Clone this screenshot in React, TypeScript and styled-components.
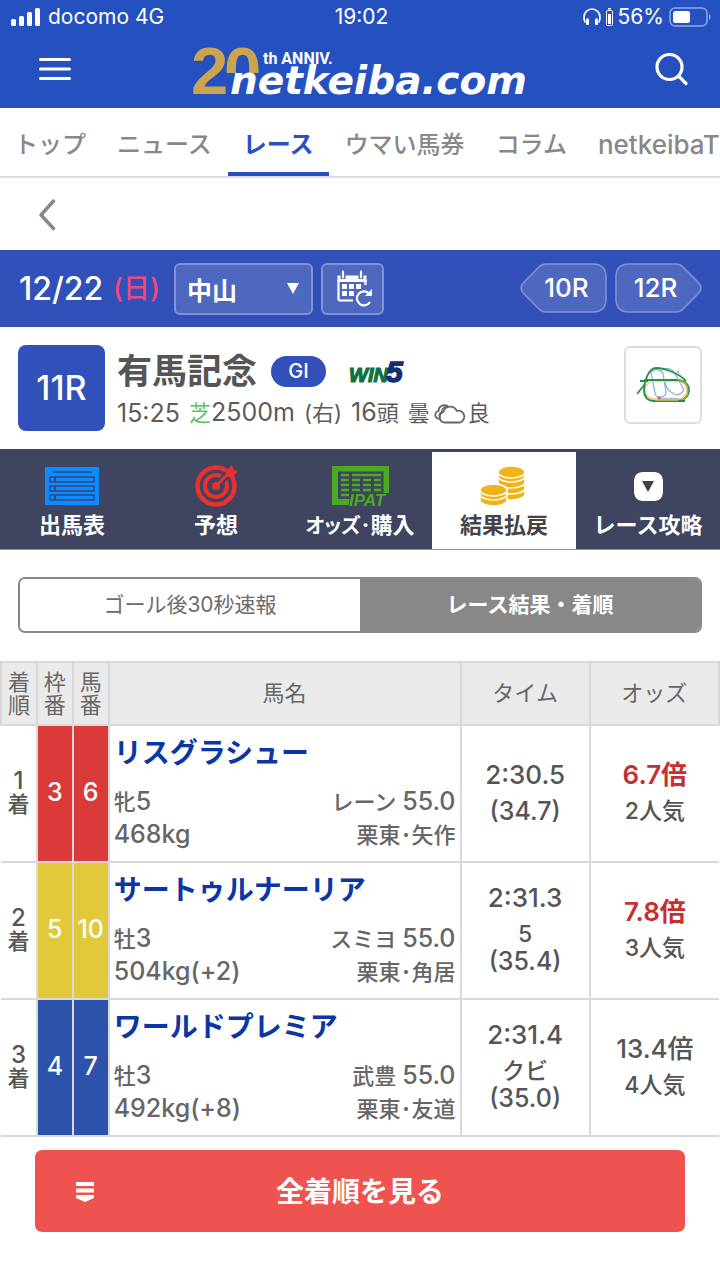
import React from "react";
import styled, { createGlobalStyle } from "styled-components";

const GlobalStyle = createGlobalStyle`
  *, *::before, *::after { box-sizing: border-box; }
  html { -webkit-text-size-adjust: 100%; }
  body {
    margin: 0;
    background: #fff;
    color: #555;
    font-family: Inter, "Noto Sans CJK JP", sans-serif;
    overflow-x: hidden;
  }
  button, select { font: inherit; color: inherit; margin: 0; padding: 0; border: 0; background: none; }
  a { color: inherit; text-decoration: none; }
  svg { display: block; flex: none; overflow: visible; }
`;

const Page = styled.div`
  width: 100%;
  overflow: hidden;
`;

/* Latin figures set larger than the kanji beside them */
const Num = styled.span<{ $size: number }>`
  font-size: ${(p) => p.$size}px;
  line-height: 20px;
`;

/* ---- header ---- */

const TopHeader = styled.header`
  background: #2551c0;
  color: #fff;
`;

const StatusBar = styled.div`
  display: grid;
  grid-template-columns: 1fr auto 1fr;
  align-items: center;
  height: 34px;
  padding: 0 8px 0 11px;
  font-size: 21px;
  line-height: 24px;
`;

const StatusGroup = styled.div<{ $end?: boolean }>`
  display: flex;
  align-items: center;
  gap: ${(p) => (p.$end ? 5 : 7)}px;
  justify-content: ${(p) => (p.$end ? "flex-end" : "flex-start")};
`;

const BrandBar = styled.div`
  display: flex;
  align-items: center;
  justify-content: space-between;
  height: 74px;
  padding: 0 32px 4px 39px;
`;

const IconButton = styled.button`
  display: flex;
  align-items: center;
  justify-content: center;
  cursor: pointer;
`;

const BrandLink = styled.a`
  display: block;
  padding-left: 8px;
`;

/* ---- navigation ---- */

const MainNav = styled.nav`
  display: flex;
  gap: 1px;
  height: 70px;
  border-bottom: 2px solid #ddd;
  overflow: hidden;
`;

const NavLink = styled.a<{ $active?: boolean; $latin?: boolean }>`
  flex: none;
  height: 68px;
  padding: 5px ${(p) => (p.$latin ? 0 : 15)}px 0 14px;
  border-bottom: 4px solid ${(p) => (p.$active ? "#2a50bd" : "transparent")};
  color: ${(p) => (p.$active ? "#2a50c4" : "#888")};
  font-size: ${(p) => (p.$latin ? 26 : 24)}px;
  font-weight: ${(p) => (p.$active ? 700 : 500)};
  line-height: 64px;
  white-space: nowrap;
  & + & { padding-left: 15px; }
`;

const BackRow = styled.div`
  display: flex;
  align-items: center;
  height: 72px;
  padding: 0 38px;
`;

/* ---- race selector ---- */

const RaceBar = styled.div`
  display: flex;
  align-items: flex-start;
  height: 77px;
  padding: 13px 18px 0 19px;
  background: #3150b9;
  color: #fff;
`;

const RaceDate = styled.div`
  display: flex;
  justify-content: space-between;
  width: 155px;
  padding-right: 14px;
  font-size: 32px;
  font-weight: 500;
  line-height: 52px;
  white-space: nowrap;
`;

const Sunday = styled.span`
  color: #f0487f;
  font-size: 27px;
`;

const VenueField = styled.label`
  display: grid;
  align-items: center;
  width: 139px;
  height: 52px;
  margin-right: 8px;
  border: 2px solid #8094d8;
  border-radius: 6px;
  background: #4f68bf;
  & > * { grid-area: 1 / 1; }
  & > svg { justify-self: end; margin: 0 12px 2px 0; pointer-events: none; }
`;

const VenueSelect = styled.select`
  appearance: none;
  width: 100%;
  height: 48px;
  padding: 4px 0 0 11px;
  font-size: 25px;
  font-weight: 700;
`;

const CalendarButton = styled(IconButton)`
  width: 63px;
  height: 52px;
  padding-left: 4px;
  border: 2px solid #8094d8;
  border-radius: 6px;
  background: #4f68bf;
`;

const RaceSteps = styled.div`
  display: flex;
  gap: 8px;
  margin-left: auto;
`;

const StepButton = styled.button<{ $next?: boolean }>`
  display: grid;
  align-items: center;
  width: 87px;
  height: 50px;
  font-size: 26px;
  font-weight: 500;
  line-height: 48px;
  cursor: pointer;
  & > * { grid-area: 1 / 1; }
  & > svg { transform: ${(p) => (p.$next ? "scaleX(-1)" : "none")}; }
  & > span { padding: ${(p) => (p.$next ? "0 6px 0 0" : "0 0 0 6px")}; z-index: 1; }
`;

/* ---- race summary ---- */

const RaceSummary = styled.section`
  display: flex;
  height: 122px;
  padding: 18px;
`;

const RaceNumber = styled.div`
  flex: none;
  width: 87px;
  height: 86px;
  border-radius: 8px;
  background: #3150b9;
  color: #fff;
  font-size: 34px;
  font-weight: 500;
  line-height: 86px;
  text-align: center;
`;

const RaceText = styled.div`
  flex: 1;
  min-width: 0;
  padding-left: 12px;
`;

const TitleRow = styled.div`
  display: flex;
  align-items: center;
  height: 52px;
`;

const RaceTitle = styled.h1`
  margin: 0 14px 0 0;
  color: #555;
  font-size: 35px;
  font-weight: 700;
  line-height: 52px;
`;

const Grade = styled.span`
  width: 55px;
  height: 31px;
  margin-right: 22px;
  border-radius: 16px;
  background: #3150b9;
  color: #fff;
  font-size: 20px;
  font-weight: 500;
  line-height: 31px;
  text-align: center;
`;

const RaceMeta = styled.div`
  display: flex;
  align-items: center;
  gap: 9px;
  color: #5c5c5c;
  font-size: 22px;
  line-height: 32px;
  white-space: nowrap;
`;

const Weather = styled.span`
  display: flex;
  align-items: center;
  gap: 4px;
`;

const Turf = styled.span`
  color: #5fc25f;
`;

const CourseButton = styled(IconButton)`
  flex: none;
  width: 78px;
  height: 78px;
  margin-top: 1px;
  border: 2px solid #ddd;
  border-radius: 6px;
`;

/* ---- section tabs ---- */

const SectionTabs = styled.nav`
  display: grid;
  grid-template-columns: repeat(5, 1fr);
  height: 101px;
  padding-top: 3px;
  border-bottom: 1px solid #8d90a5;
  background: #3f4460;
`;

const SectionTab = styled.a<{ $active?: boolean }>`
  display: flex;
  flex-direction: column;
  align-items: center;
  padding-top: 12px;
  background: ${(p) => (p.$active ? "#fff" : "transparent")};
  color: ${(p) => (p.$active ? "#444" : "#fff")};
  font-size: 22px;
  font-weight: 700;
  line-height: 34px;
  white-space: nowrap;
`;

const TightKana = styled.span`
  font-size: 20px;
  font-feature-settings: "palt";
`;

const TabIcon = styled.span`
  display: flex;
  align-items: center;
  height: 44px;
`;

const MoreBox = styled.span`
  display: flex;
  align-items: center;
  justify-content: center;
  width: 29px;
  height: 29px;
  border-radius: 8px;
  background: #fff;
  outline: 1px solid #444;
`;

/* ---- result switch ---- */

const ResultSwitch = styled.div`
  display: grid;
  grid-template-columns: 1fr 1fr;
  height: 56px;
  margin: 27px 18px 28px;
  border: 2px solid #888;
  border-radius: 7px;
  overflow: hidden;
`;

const SwitchButton = styled.button<{ $active?: boolean }>`
  background: ${(p) => (p.$active ? "#888" : "#fff")};
  color: ${(p) => (p.$active ? "#fff" : "#6c6c6c")};
  font-size: 21px;
  font-weight: ${(p) => (p.$active ? 700 : 400)};
  line-height: 52px;
`;

/* ---- results ---- */

const ResultTable = styled.table`
  width: 100%;
  table-layout: fixed;
  border-collapse: collapse;
`;

const HeadCell = styled.th`
  height: 63px;
  padding: 0;
  border: 2px solid #d9d9d9;
  background: #eaeaea;
  color: #666;
  font-size: 22px;
  font-weight: 400;
  line-height: 23px;
`;

const Cell = styled.td`
  height: 137px;
  padding: 0 0 2px;
  border: 2px solid #d9d9d9;
  color: #555;
  font-size: 23px;
  font-weight: 500;
  line-height: 27px;
  text-align: center;
  &:first-child { border-left: 0; }
  &:last-child { border-right: 0; }
`;

const PlaceCell = styled(Cell)`
  font-size: 22px;
  line-height: 23px;
`;

const FrameCell = styled(Cell)<{ $color: string }>`
  background: ${(p) => p.$color};
  color: #fff;
  font-size: 25px;
  white-space: nowrap;
`;

const HorseCell = styled(Cell)`
  padding: 6px 4px;
  text-align: left;
  vertical-align: top;
`;

const HorseLink = styled.a`
  display: block;
  margin-bottom: 12px;
  color: #0a37a5;
  font-size: 28px;
  font-weight: 700;
  line-height: 42px;
`;

const DetailRow = styled.div`
  display: flex;
  align-items: baseline;
  justify-content: space-between;
  color: #666;
  font-size: 22px;
  line-height: 33px;
  white-space: nowrap;
`;

const MainLine = styled.div<{ $hot?: boolean }>`
  margin-bottom: 10px;
  color: ${(p) => (p.$hot ? "#c4302f" : "#555")};
  font-size: 26px;
  font-weight: ${(p) => (p.$hot ? 600 : 500)};
`;

const SubLine = styled.div<{ $figures?: boolean }>`
  font-size: ${(p) => (p.$figures ? 25 : 23)}px;
`;

const ShowAllButton = styled.button`
  display: grid;
  grid-template-columns: 48px 1fr 48px;
  align-items: center;
  width: calc(100% - 70px);
  height: 82px;
  margin: 13px 35px 48px;
  padding: 2px 26px 0;
  border-radius: 7px;
  background: #ef5350;
  color: #fff;
  font-size: 28px;
  font-weight: 700;
  line-height: 40px;
  & > svg { justify-self: center; }
`;

/* ---- drawings ---- */

const SignalIcon = () => (
  <svg width="30" height="20" viewBox="0 0 30 20" fill="#fff" aria-hidden="true">
    <rect x="0" y="12" width="5" height="7" rx="1.5" />
    <rect x="8" y="9" width="5" height="10" rx="1.5" />
    <rect x="16" y="5" width="5" height="14" rx="1.5" />
    <rect x="24" y="1" width="5" height="18" rx="1.5" />
  </svg>
);

const HeadphonesIcon = () => (
  <svg width="18" height="18" viewBox="0 0 18 18" fill="none" aria-hidden="true">
    <path d="M2.2 14.5C1 12.6 1 11 1 9a8 8 0 0 1 16 0c0 2 0 3.6-1.2 5.5" stroke="#fff" strokeWidth="1.7" />
    <rect x="3" y="10.5" width="3" height="6.5" rx="1" fill="#fff" />
    <rect x="12" y="10.5" width="3" height="6.5" rx="1" fill="#fff" />
  </svg>
);

const DeviceBatteryIcon = () => (
  <svg width="7" height="18" viewBox="0 0 7 18" fill="none" aria-hidden="true">
    <rect x="2" y="0" width="3" height="1.5" fill="#fff" />
    <rect x="0.5" y="2.5" width="6" height="15" rx="1.2" stroke="#fff" />
    <rect x="2" y="6" width="3" height="10" fill="#fff" />
  </svg>
);

const BatteryIcon = () => (
  <svg width="43" height="20" viewBox="0 0 43 20" fill="none" aria-hidden="true">
    <rect x="1" y="1" width="37" height="18" rx="5" stroke="#8ea6e4" strokeWidth="1.5" />
    <rect x="4" y="4" width="17" height="12" rx="2.5" fill="#fff" />
    <path d="M40 7c2 .8 2 5.2 0 6z" fill="#8ea6e4" />
  </svg>
);

const MenuIcon = () => (
  <svg width="32" height="24" viewBox="0 0 32 24" stroke="#fff" strokeWidth="3" strokeLinecap="round" aria-hidden="true">
    <path d="M1.5 2.5h29M1.5 12h29M1.5 21.5h29" />
  </svg>
);

const SearchIcon = () => (
  <svg width="34" height="34" viewBox="0 0 34 34" fill="none" stroke="#fff" strokeWidth="3.2" strokeLinecap="round" aria-hidden="true">
    <circle cx="15.5" cy="15" r="12.5" />
    <path d="M25 24.5l7 7" />
  </svg>
);

const Logo = () => (
  <svg width="348" height="56" viewBox="0 0 348 56" role="img" aria-label="netkeiba.com">
    <g fill="#cba44f" fontFamily="'Liberation Sans', sans-serif" fontWeight="700" fontSize="67">
      <text x="-2" y="53">2</text>
      <text x="31" y="53">0</text>
    </g>
    <path d="M33 32H72V56H33z" fill="#2551c0" />
    <g fill="#fff">
      <text x="70" y="23" fontFamily="Roboto, sans-serif" fontWeight="700" fontSize="16">th ANNIV.</text>
      <text x="37" y="53" fontFamily="'DejaVu Sans', sans-serif" fontWeight="700" fontStyle="italic" fontSize="39">netkeiba.com</text>
    </g>
  </svg>
);

const BackIcon = () => (
  <svg width="18" height="32" viewBox="0 0 18 32" fill="none" stroke="#888" strokeWidth="3.5" strokeLinecap="round" strokeLinejoin="round" aria-hidden="true">
    <path d="M15.5 3L3 17 15.5 30.5" />
  </svg>
);

const DownTriangle = ({ color = "#fff" }: { color?: string }) => (
  <svg width="12" height="12" viewBox="0 0 12 12" fill={color} aria-hidden="true">
    <path d="M0 1h12L6 12z" />
  </svg>
);

const CalendarIcon = () => (
  <svg width="38" height="38" viewBox="0 0 38 38" fill="none" aria-hidden="true">
    <path d="M7 1.5v6M25 1.5v6" stroke="#fff" strokeWidth="2.2" strokeLinecap="round" />
    <path d="M1.5 5.5H4.5v3.5h5v-3.5h13v3.5h5v-3.5h3V12h-29z" fill="#fff" />
    <path d="M2.5 10v18.5a2 2 0 0 0 2 2H17M29.5 10v5" stroke="#fff" strokeWidth="2.2" />
    <path d="M6 14h5v5H6zM13 14h5v5h-5zM20 14h5v5h-5zM6 21h5v5H6zM13 21h5v5h-5z" fill="#fff" />
    <path d="M33 23.5a7 7 0 1 0 1 8.5" stroke="#fff" strokeWidth="2.2" />
    <path d="M36 19v7h-7z" fill="#fff" />
  </svg>
);

const StepShape = () => (
  <svg width="87" height="50" viewBox="0 0 87 50" aria-hidden="true">
    <path
      d="M26 1H73Q86 1 86 14V36Q86 49 73 49H26Q22 49 19 46L4 31Q-2 25 4 19L19 4Q22 1 26 1Z"
      fill="#4f68bf"
      stroke="#8094d8"
      strokeWidth="1.5"
    />
  </svg>
);

const Win5Logo = () => (
  <svg width="58" height="28" viewBox="0 0 58 28" role="img" aria-label="WIN5" fontFamily="'Liberation Sans', sans-serif" fontWeight="700" fontStyle="italic">
    <text x="1" y="25" fontSize="20" fill="#11713f" stroke="#11713f" strokeWidth="1.2">WIN</text>
    <text x="38" y="25" fontSize="30" fill="#152f73" stroke="#152f73" strokeWidth="1.5">5</text>
  </svg>
);

const CloudIcon = () => (
  <svg width="30" height="22" viewBox="0 0 30 22" fill="none" stroke="#666" strokeWidth="1.8" aria-hidden="true">
    <path d="M11 20.5a5.500 5.500 0 0 1-1.5-10.7 7 7 0 0 1 13.2-1 6 6 0 1 1 .8 11.7z" />
    <path d="M6 17C0 16.5 0 10.5 4.5 9 4.5 4.5 9 2 14 4" />
    <path d="M6 15.5C4 13.5 5.5 11 7.5 10.5 7.5 7 10 5 13.5 4.5" strokeWidth="1.3" />
  </svg>
);

const CourseMap = () => (
  <svg width="54" height="40" viewBox="0 0 54 40" fill="none" aria-hidden="true">
    <g stroke="#8fb0e2" strokeWidth="1.3">
      <path d="M15 8c2-5 11-4 12 1l3 18c0 6-10 7-11 1z" />
      <path d="M28 4c4-1 8 0 10 3l9 16c2 5-5 8-9 6-6-3-9-8-9-14" />
    </g>
    <rect x="9" y="16" width="42" height="18" rx="9" stroke="#f6cf9e" strokeWidth="2" />
    <path d="M8 15H41c7 0 12 4 12 10s-5 11-12 11H19C12 36 8 32 8 25c0-9 5-22 12-22 10 0 25 7 30 13" stroke="#2a9048" strokeWidth="1.8" />
    <path d="M41 14.5c7 1 11 5 11 11s-4 10-11 10H19" stroke="#a3b04d" strokeWidth="1.2" />
    <path d="M1 29l8-10M4 16h8M42 36h7" stroke="#2a9048" strokeWidth="1.8" />
    <path d="M24 34h18" stroke="#b9b9b9" strokeWidth="2.5" />
    <circle cx="23" cy="33" r="1.6" fill="#e05050" />
    <circle cx="42" cy="7" r="1.2" fill="#6cc4dc" />
  </svg>
);

const EntriesIcon = () => (
  <svg width="54" height="38" viewBox="0 0 54 38" fill="none" aria-hidden="true">
    <rect width="54" height="38" fill="#0f8bff" />
    <path d="M8 5h39" stroke="#2c4a80" strokeWidth="1.5" />
    <g stroke="#2c4a80" strokeWidth="1.5">
      <path d="M5 10h44v5H5zM5 19h44v5H5zM5 28h44v5H5z" />
      <path d="M10 10v5M10 19v5M10 28v5" strokeWidth="2" />
    </g>
  </svg>
);

const TargetIcon = () => (
  <svg width="43" height="42" viewBox="0 0 43 42" fill="none" aria-hidden="true">
    <circle cx="21" cy="21" r="18.5" stroke="#e8322e" strokeWidth="4.5" />
    <circle cx="21" cy="21" r="11" stroke="#e8322e" strokeWidth="4" />
    <path d="M21 21L42 0" stroke="#3f4460" strokeWidth="7" />
    <circle cx="21" cy="21" r="4" fill="#e8322e" />
    <path d="M21 21L36 6" stroke="#e8322e" strokeWidth="2.8" />
    <path d="M31 12V6l6-6 1.5 4.5L43 6l-6 6z" fill="#e8322e" />
  </svg>
);

const IpatIcon = () => (
  <svg width="57" height="42" viewBox="0 0 57 42" fill="none" aria-hidden="true">
    <path d="M0 1H57V28H51.5V6.5H6V34H19V40H0z" fill="#4caa20" />
    <g stroke="#4caa20" strokeWidth="2.6">
      <path d="M9 10h8M20 10h29M9 15h8M9 20h8M9 25h8M9 30h8" />
      <path d="M20 15h8M20 20h8M20 25h8M31 15h8M31 20h8M31 25h8M42 15h7M42 20h7M42 25h7" />
    </g>
    <text x="17" y="41" fontFamily="'Liberation Sans', sans-serif" fontWeight="700" fontStyle="italic" fontSize="17" fill="#4caa20" stroke="#3f4460" strokeWidth="2" paintOrder="stroke">
      IPAT
    </text>
  </svg>
);

const Coins = ({ x, y, layers }: { x: number; y: number; layers: number }) => (
  <g>
    {Array.from({ length: layers }, (_, i) => {
      const top = y + (layers - 1 - i) * 6;
      return (
        <path
          key={top}
          d={`M${x} ${top}a13.5 6 0 0 1 27 0v4a13.5 6 0 0 1-27 0z`}
          fill="#f0b41a"
          stroke="#fff"
          strokeWidth="1.5"
        />
      );
    })}
    <ellipse cx={x + 13.5} cy={y} rx="13.5" ry="6" fill="#f0b41a" stroke="#fff" strokeWidth="1.5" />
  </g>
);

const CoinsIcon = () => (
  <svg width="46" height="42" viewBox="0 0 46 42" fill="none" aria-hidden="true">
    <Coins x={17} y={7} layers={4} />
    <Coins x={-1} y={25} layers={2} />
  </svg>
);

const ExpandIcon = () => (
  <svg width="18" height="20" viewBox="0 0 18 20" fill="#fff" aria-hidden="true">
    <path d="M0 0h18v4H0zM0 6.5h18v4H0zM0 13h18v3l-9 4-9-4z" />
  </svg>
);

/* ---- data ---- */

const navItems = ["トップ", "ニュース", "レース", "ウマい馬券", "コラム", "netkeibaT"];

const results = [
  {
    place: "1", frame: "3", number: "6", color: "#db3a3a", name: "リスグラシュー", sex: "牝", age: "5", jockey: "レーン", load: "55.0",
    weight: "468kg", trainer: "栗東･矢作", time: "2:30.5", margin: "", last: "(34.7)", odds: "6.7倍", popularity: "2人気", hot: true,
  },
  {
    place: "2", frame: "5", number: "10", color: "#e2c93b", name: "サートゥルナーリア", sex: "牡", age: "3", jockey: "スミヨ", load: "55.0",
    weight: "504kg(+2)", trainer: "栗東･角居", time: "2:31.3", margin: "5", last: "(35.4)", odds: "7.8倍", popularity: "3人気", hot: true,
  },
  {
    place: "3", frame: "4", number: "7", color: "#2c52a9", name: "ワールドプレミア", sex: "牡", age: "3", jockey: "武豊", load: "55.0",
    weight: "492kg(+8)", trainer: "栗東･友道", time: "2:31.4", margin: "クビ", last: "(35.0)", odds: "13.4倍", popularity: "4人気", hot: false,
  },
];

export default function App() {
  return (
    <Page>
      <GlobalStyle />
      <TopHeader>
        <StatusBar>
          <StatusGroup>
            <SignalIcon />
            <span>docomo 4G</span>
          </StatusGroup>
          <span>19:02</span>
          <StatusGroup $end>
            <HeadphonesIcon />
            <DeviceBatteryIcon />
            <span>56%</span>
            <BatteryIcon />
          </StatusGroup>
        </StatusBar>
        <BrandBar>
          <IconButton type="button" aria-label="メニュー"><MenuIcon /></IconButton>
          <BrandLink href="#top"><Logo /></BrandLink>
          <IconButton type="button" aria-label="検索"><SearchIcon /></IconButton>
        </BrandBar>
      </TopHeader>

      <MainNav>
        {navItems.map((item) => (
          <NavLink key={item} href="#nav" $active={item === "レース"} $latin={item === "netkeibaT"}>{item}</NavLink>
        ))}
      </MainNav>

      <BackRow>
        <IconButton type="button" aria-label="戻る"><BackIcon /></IconButton>
      </BackRow>

      <RaceBar>
        <RaceDate>
          <span>12/22</span>
          <Sunday>(日)</Sunday>
        </RaceDate>
        <VenueField>
          <VenueSelect aria-label="開催場" defaultValue="中山">
            <option>中山</option>
          </VenueSelect>
          <DownTriangle />
        </VenueField>
        <CalendarButton type="button" aria-label="カレンダー"><CalendarIcon /></CalendarButton>
        <RaceSteps>
          <StepButton type="button"><StepShape /><span>10R</span></StepButton>
          <StepButton type="button" $next><StepShape /><span>12R</span></StepButton>
        </RaceSteps>
      </RaceBar>

      <RaceSummary>
        <RaceNumber>11R</RaceNumber>
        <RaceText>
          <TitleRow>
            <RaceTitle>有馬記念</RaceTitle>
            <Grade>GI</Grade>
            <Win5Logo />
          </TitleRow>
          <RaceMeta>
            <Num $size={25}>15:25</Num>
            <span><Turf>芝</Turf><Num $size={25}>2500m</Num></span>
            <span>(右)</span>
            <span><Num $size={25}>16</Num>頭</span>
            <Weather>曇<CloudIcon />良</Weather>
          </RaceMeta>
        </RaceText>
        <CourseButton type="button" aria-label="コース図"><CourseMap /></CourseButton>
      </RaceSummary>

      <SectionTabs>
        <SectionTab href="#entries"><TabIcon><EntriesIcon /></TabIcon>出馬表</SectionTab>
        <SectionTab href="#forecast"><TabIcon><TargetIcon /></TabIcon>予想</SectionTab>
        <SectionTab href="#odds">
          <TabIcon><IpatIcon /></TabIcon>
          <span><TightKana>オッズ･</TightKana>購入</span>
        </SectionTab>
        <SectionTab href="#result" $active><TabIcon><CoinsIcon /></TabIcon>結果払戻</SectionTab>
        <SectionTab href="#guide">
          <TabIcon><MoreBox><DownTriangle color="#444" /></MoreBox></TabIcon>
          レース攻略
        </SectionTab>
      </SectionTabs>

      <ResultSwitch>
        <SwitchButton type="button">ゴール後30秒速報</SwitchButton>
        <SwitchButton type="button" $active>レース結果・着順</SwitchButton>
      </ResultSwitch>

      <ResultTable>
        <colgroup>
          <col style={{ width: "5%" }} />
          <col style={{ width: "5%" }} />
          <col style={{ width: "5%" }} />
          <col style={{ width: "49%" }} />
          <col style={{ width: "18%" }} />
          <col style={{ width: "18%" }} />
        </colgroup>
        <thead>
          <tr>
            <HeadCell scope="col">着<br />順</HeadCell>
            <HeadCell scope="col">枠<br />番</HeadCell>
            <HeadCell scope="col">馬<br />番</HeadCell>
            <HeadCell scope="col">馬名</HeadCell>
            <HeadCell scope="col">タイム</HeadCell>
            <HeadCell scope="col">オッズ</HeadCell>
          </tr>
        </thead>
        <tbody>
          {results.map((r) => (
            <tr key={r.place}>
              <PlaceCell><Num $size={24}>{r.place}</Num><br />着</PlaceCell>
              <FrameCell $color={r.color}>{r.frame}</FrameCell>
              <FrameCell $color={r.color}>{r.number}</FrameCell>
              <HorseCell>
                <HorseLink href="#horse">{r.name}</HorseLink>
                <DetailRow>
                  <span>{r.sex}<Num $size={25}>{r.age}</Num></span>
                  <span>{r.jockey} <Num $size={25}>{r.load}</Num></span>
                </DetailRow>
                <DetailRow>
                  <Num $size={25}>{r.weight}</Num>
                  <span>{r.trainer}</span>
                </DetailRow>
              </HorseCell>
              <Cell>
                <MainLine>{r.time}</MainLine>
                {r.margin && <SubLine>{r.margin}</SubLine>}
                <SubLine $figures>{r.last}</SubLine>
              </Cell>
              <Cell>
                <MainLine $hot={r.hot}>{r.odds}</MainLine>
                <SubLine>{r.popularity}</SubLine>
              </Cell>
            </tr>
          ))}
        </tbody>
      </ResultTable>

      <ShowAllButton type="button">
        <ExpandIcon />
        <span>全着順を見る</span>
      </ShowAllButton>
    </Page>
  );
}
